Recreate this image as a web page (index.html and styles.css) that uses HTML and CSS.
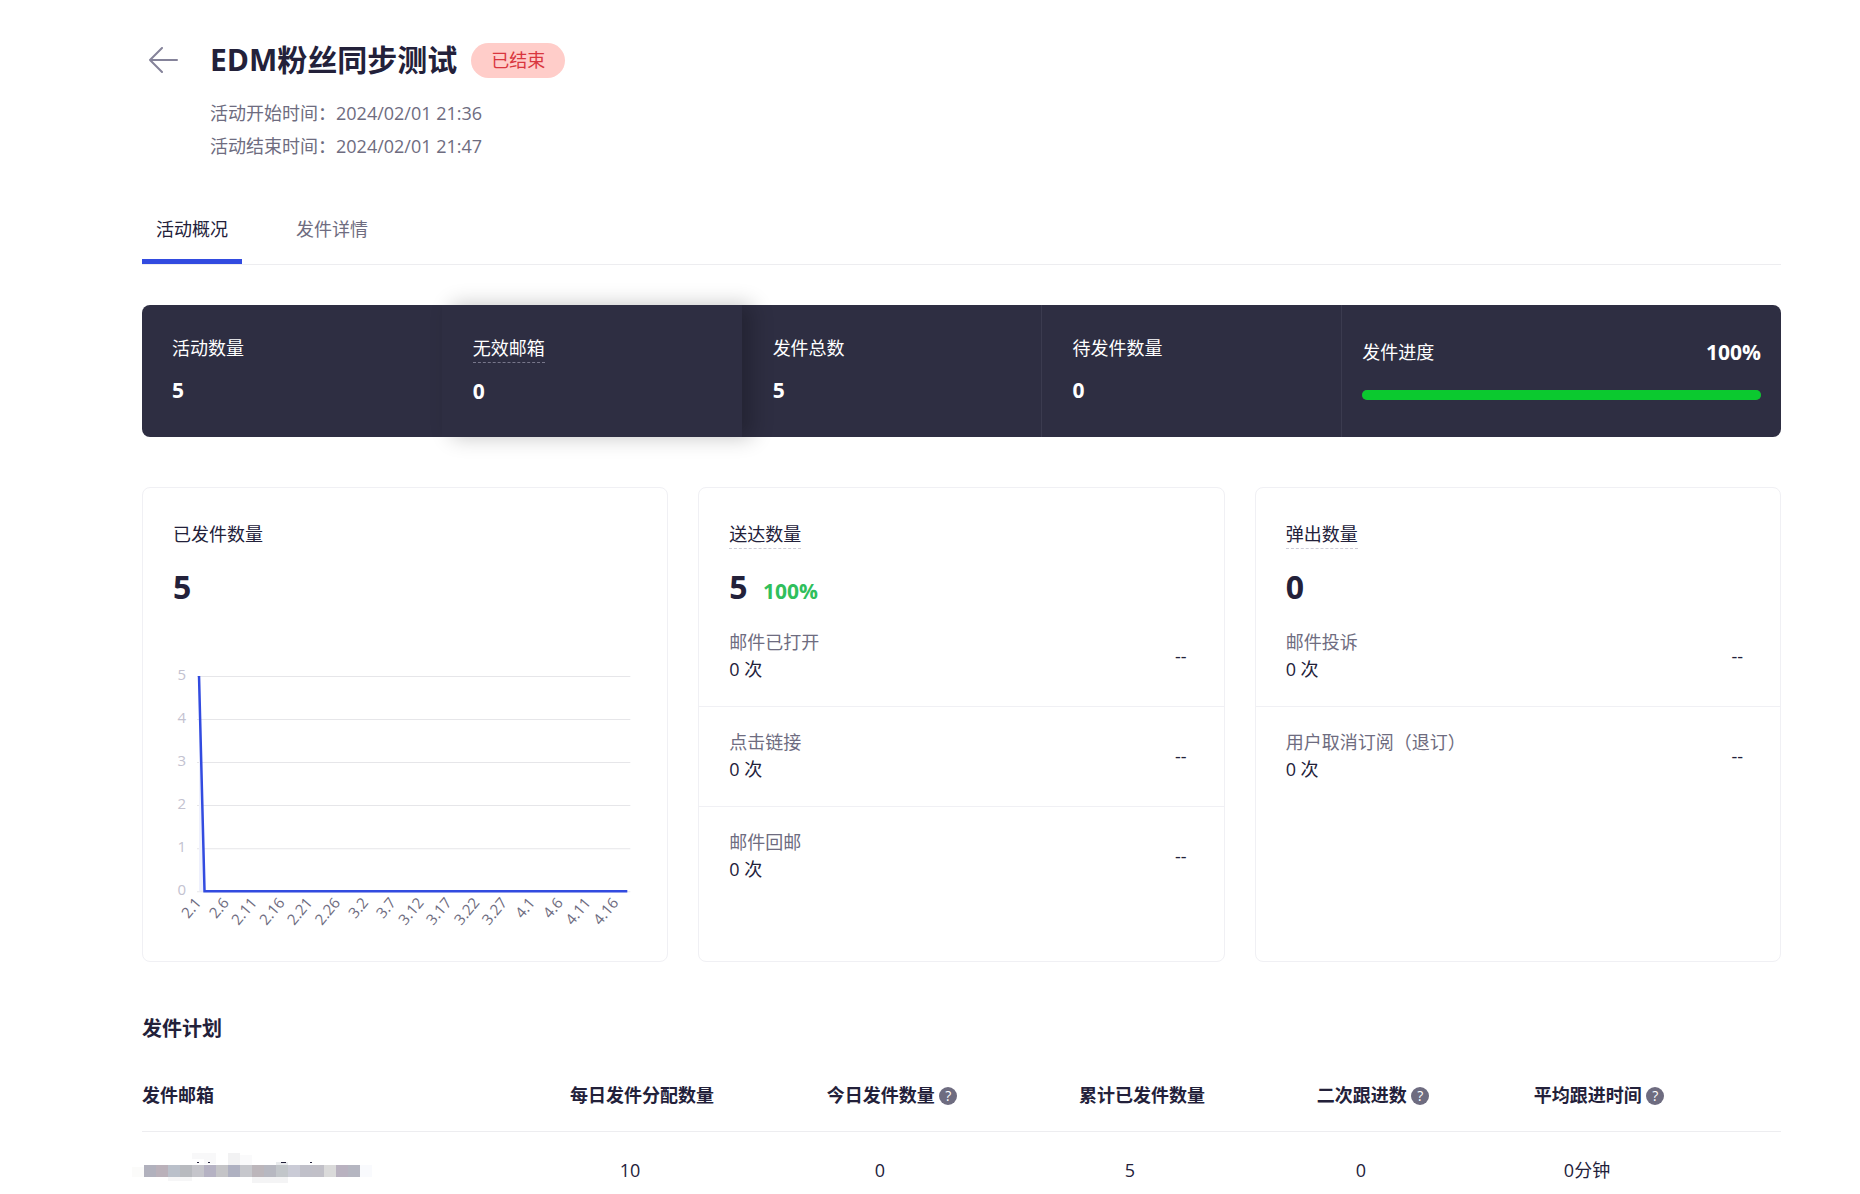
FILE: index.html
```html
<!DOCTYPE html>
<html lang="zh-CN">
<head>
    <meta charset="UTF-8">
    <meta name="viewport" content="width=device-width, initial-scale=1.0">
    <title>EDM粉丝同步测试</title>
    <link rel="stylesheet" href="styles.css">
</head>
<body>
    <main class="page">
        <header class="header">
            <a class="back" href="#" aria-label="返回">
                <svg width="30" height="26" viewBox="0 0 30 26" fill="none" stroke="#85839a" stroke-width="2" stroke-linecap="round" stroke-linejoin="round">
                    <path d="M29 13H2M14 1L2 13l12 12"/>
                </svg>
            </a>
            <div>
                <div class="title-row">
                    <h1>EDM粉丝同步测试</h1>
                    <span class="badge">已结束</span>
                </div>
                <p class="time">活动开始时间：2024/02/01 21:36</p>
                <p class="time">活动结束时间：2024/02/01 21:47</p>
            </div>
        </header>

        <nav class="tabs">
            <a class="tab active" href="#">活动概况</a>
            <a class="tab" href="#">发件详情</a>
        </nav>

        <!-- Summary bar -->
        <section class="stats">
            <div class="stat">
                <span>活动数量</span>
                <strong>5</strong>
            </div>
            <div class="stat raised">
                <span class="hint">无效邮箱</span>
                <strong>0</strong>
            </div>
            <div class="stat">
                <span>发件总数</span>
                <strong>5</strong>
            </div>
            <div class="stat">
                <span>待发件数量</span>
                <strong>0</strong>
            </div>
            <div class="stat progress">
                <div class="progress-head">
                    <span>发件进度</span>
                    <strong>100%</strong>
                </div>
                <div class="progress-bar"><span style="width: 100%"></span></div>
            </div>
        </section>

        <section class="cards">
            <div class="card">
                <div class="card-head">
                    <span class="card-title">已发件数量</span>
                    <div class="card-number">5</div>
                </div>
                <svg class="chart" viewBox="0 0 464 270">
                    <g id="chart-grid"></g>
                    <path class="area" d="M26 15L31.5 230H26z"/>
                    <path class="line" d="M26 15L31.5 230H454"/>
                    <g id="chart-labels"></g>
                </svg>
            </div>

            <div class="card">
                <div class="card-head">
                    <span class="card-title hint">送达数量</span>
                    <div class="card-number">5 <span class="rate">100%</span></div>
                </div>
                <div class="card-row">
                    <div><span class="muted">邮件已打开</span><span>0 次</span></div>
                    <span>--</span>
                </div>
                <div class="card-row">
                    <div><span class="muted">点击链接</span><span>0 次</span></div>
                    <span>--</span>
                </div>
                <div class="card-row">
                    <div><span class="muted">邮件回邮</span><span>0 次</span></div>
                    <span>--</span>
                </div>
            </div>

            <div class="card">
                <div class="card-head">
                    <span class="card-title hint">弹出数量</span>
                    <div class="card-number">0</div>
                </div>
                <div class="card-row">
                    <div><span class="muted">邮件投诉</span><span>0 次</span></div>
                    <span>--</span>
                </div>
                <div class="card-row">
                    <div><span class="muted">用户取消订阅（退订）</span><span>0 次</span></div>
                    <span>--</span>
                </div>
            </div>
        </section>

        <h2>发件计划</h2>
        <table class="plan">
            <colgroup>
                <col>
                <col class="col-count">
                <col class="col-count">
                <col class="col-count">
                <col class="col-follow">
                <col class="col-time">
            </colgroup>
            <thead>
                <tr>
                    <th>发件邮箱</th>
                    <th>每日发件分配数量</th>
                    <th>今日发件数量 <span class="help">?</span></th>
                    <th>累计已发件数量</th>
                    <th>二次跟进数 <span class="help">?</span></th>
                    <th>平均跟进时间 <span class="help">?</span></th>
                </tr>
            </thead>
            <tbody>
                <tr>
                    <td><svg id="mask" class="mask" width="240" height="36" viewBox="0 0 240 36" role="img" aria-label="邮箱已隐藏"></svg></td>
                    <td>10</td>
                    <td>0</td>
                    <td>5</td>
                    <td>0</td>
                    <td>0分钟</td>
                </tr>
            </tbody>
        </table>
    </main>

    <script src="script.js"></script>
</body>
</html>
```
FILE: styles.css
```css
* {
    box-sizing: border-box;
}
body {
    margin: 0;
    background-color: #fff;
    color: #23213a;
    font-family: "Open Sans", "Noto Sans CJK SC", sans-serif;
    font-size: 18px;
    line-height: 27px;
}
h1, h2, p {
    margin: 0;
}
a {
    color: inherit;
    text-decoration: none;
}
.page {
    padding: 40px 79px 0 142px;
}
.header {
    display: flex;
    gap: 32px;
}
.back {
    display: flex;
    align-items: center;
    width: 36px;
    height: 40px;
    padding-left: 6px;
}
.title-row {
    display: flex;
    align-items: center;
    gap: 14px;
    height: 40px;
    margin-bottom: 17px;
}
h1 {
    font-size: 30px;
    line-height: 40px;
}
.badge {
    padding: 4px 20px;
    border-radius: 18px;
    background-color: #ffcdc9;
    color: #d9363e;
}
.time {
    color: #6e6c80;
    line-height: 33px;
}
.muted {
    color: #6e6c80;
}
.tabs {
    display: flex;
    gap: 40px;
    margin-top: 48px;
    border-bottom: 1px solid #ededf0;
}
.tab {
    padding: 5px 14px 16px;
    border-bottom: 5px solid transparent;
    color: #6e6c80;
}
.tab.active {
    color: #23213a;
    border-color: #324be0;
}
.stats {
    display: grid;
    grid-template-columns: 15fr 15fr 15fr 15fr 22fr;
    margin-top: 40px;
    border-radius: 8px;
    background-color: #2e2e42;
    color: #fff;
}
.stat {
    display: flex;
    flex-direction: column;
    align-items: flex-start;
    gap: 15px;
    min-height: 132px;
    padding: 30px;
    border-left: 1px solid #3b3b4f;
}
.stat:first-child {
    border-left: none;
}
.stat strong {
    font-size: 21px;
}
.stat.raised {
    border-color: transparent;
    background-color: #2e2e42;
    box-shadow: 10px 0 20px rgba(0, 0, 0, 0.24);
}
.raised + .stat {
    border-color: transparent;
}
.hint {
    border-bottom: 1px dashed #cfced8;
}
.stat .hint {
    border-color: #77768a;
}
.stat.progress {
    align-items: stretch;
    gap: 24px;
    padding: 34px 20px 0;
}
.progress-head {
    display: flex;
    justify-content: space-between;
}
.progress-bar {
    height: 10px;
    border-radius: 5px;
    background-color: #47475a;
}
.progress-bar span {
    display: block;
    height: 100%;
    border-radius: 5px;
    background-color: #0bc92f;
}
.cards {
    display: grid;
    grid-template-columns: repeat(3, 1fr);
    gap: 30px;
    margin-top: 50px;
}
.card {
    padding-bottom: 30px;
    border: 1px solid #f0f0f4;
    border-radius: 8px;
}
.card-head {
    padding: 33px 30px 0;
}
.card-title {
    display: inline-block;
    height: 28px;
}
.card-number {
    margin-top: 18px;
    font-size: 32px;
    font-weight: bold;
    line-height: 40px;
}
.rate {
    margin-left: 7px;
    color: #30bf5c;
    font-size: 21px;
    line-height: 24px;
}
.card-row {
    display: flex;
    align-items: center;
    justify-content: space-between;
    padding: 22px 37px 23px 30px;
}
.card-row + .card-row {
    border-top: 1px solid #f0f0f4;
}
.card-row div {
    display: flex;
    flex-direction: column;
}
.chart {
    display: block;
    width: calc(100% - 60px);
    margin: 54px 30px 0;
}
.chart text {
    font-size: 15px;
    fill: #6e6c80;
    text-anchor: end;
}
.chart .tick {
    fill: #c3c2d0;
}
.chart .grid {
    stroke: #e6e6e9;
}
.chart .area {
    fill: #eef0fd;
}
.chart .line {
    fill: none;
    stroke: #324be0;
    stroke-width: 2.5;
}
h2 {
    margin-top: 53px;
    font-size: 20px;
    line-height: 28px;
}
.plan {
    width: 100%;
    margin-top: 18px;
    border-collapse: collapse;
    table-layout: fixed;
}
.plan th {
    height: 70px;
    padding: 0 0 0 24px;
    border-bottom: 1px solid #ededf0;
}
.plan td {
    height: 78px;
    padding: 0;
    text-align: center;
}
.plan th:first-child, .plan td:first-child {
    padding: 0;
    text-align: left;
}
.plan th:last-child, .plan td:last-child {
    padding-right: 74px;
}
.col-count {
    width: 250px;
}
.col-follow {
    width: 212px;
}
.col-time {
    width: 314px;
}
.help {
    display: inline-block;
    width: 18px;
    height: 18px;
    border-radius: 50%;
    background-color: #6e6c80;
    color: #fff;
    font-size: 14px;
    font-weight: normal;
    line-height: 18px;
    vertical-align: 1px;
}
.mask {
    display: block;
    margin-left: -10px;
}
```
FILE: script.js
```js
const svgNs = "http://www.w3.org/2000/svg";

function draw(parent, tag, attrs, text) {
    const el = document.createElementNS(svgNs, tag);
    Object.keys(attrs).forEach(key => el.setAttribute(key, attrs[key]));
    if (text !== undefined) el.textContent = text;
    parent.appendChild(el);
}

// Chart: value axis and grid lines
const grid = document.getElementById("chart-grid");
for (let i = 0; i <= 5; i++) {
    const y = 230.5 - i * 43;
    draw(grid, "line", { class: "grid", x1: 24, x2: 457, y1: y, y2: y });
    draw(grid, "text", { class: "tick", x: 13, y: y + 3 }, i);
}

// Chart: dates
const dates = ["2.1", "2.6", "2.11", "2.16", "2.21", "2.26", "3.2", "3.7", "3.12", "3.17", "3.22", "3.27", "4.1", "4.6", "4.11", "4.16"];
const labels = document.getElementById("chart-labels");
dates.forEach((date, i) => {
    draw(labels, "text", { transform: `translate(${29 + i * 27.8} 242) rotate(-50)` }, date);
});

// Masked mailbox
const mask = document.getElementById("mask");
const colors = ["#b1b1bd", "#bab1ba", "#bac0ca", "#b8babf", "#c5c5cb", "#b5b2c3", "#c4c4c7", "#afb1c1", "#c6c7cc", "#bcb6bb", "#b7b8c1", "#c2c6ca", "#cacbd6", "#c0c0c9", "#c1c0c8", "#dadada", "#b9b2c0", "#b5b6c1"];
[
    [0, 15, 12, 10, "#fbfbfa"], [60, 1, 24, 6, "#f8f8f9"], [72, 7, 12, 5, "#f8f8f9"],
    [96, 1, 12, 12, "#f2f2f3"], [108, 3, 12, 10, "#fafafb"], [144, 10, 12, 3, "#e9ebed"],
    [36, 25, 24, 4, "#f6f6f7"], [120, 25, 36, 6, "#f4f4f5"], [228, 13, 12, 12, "#f9fafd"],
    [65, 10, 2, 1, "#23213a"], [76, 10, 2, 1, "#23213a"], [149, 10, 5, 1, "#23213a"], [178, 10, 2, 1, "#23213a"]
].forEach(([x, y, width, height, fill]) => draw(mask, "rect", { x, y, width, height, fill }));
colors.forEach((fill, i) => {
    draw(mask, "rect", { x: 12 + i * 12, y: 13, width: 12, height: 12, fill });
});
```
